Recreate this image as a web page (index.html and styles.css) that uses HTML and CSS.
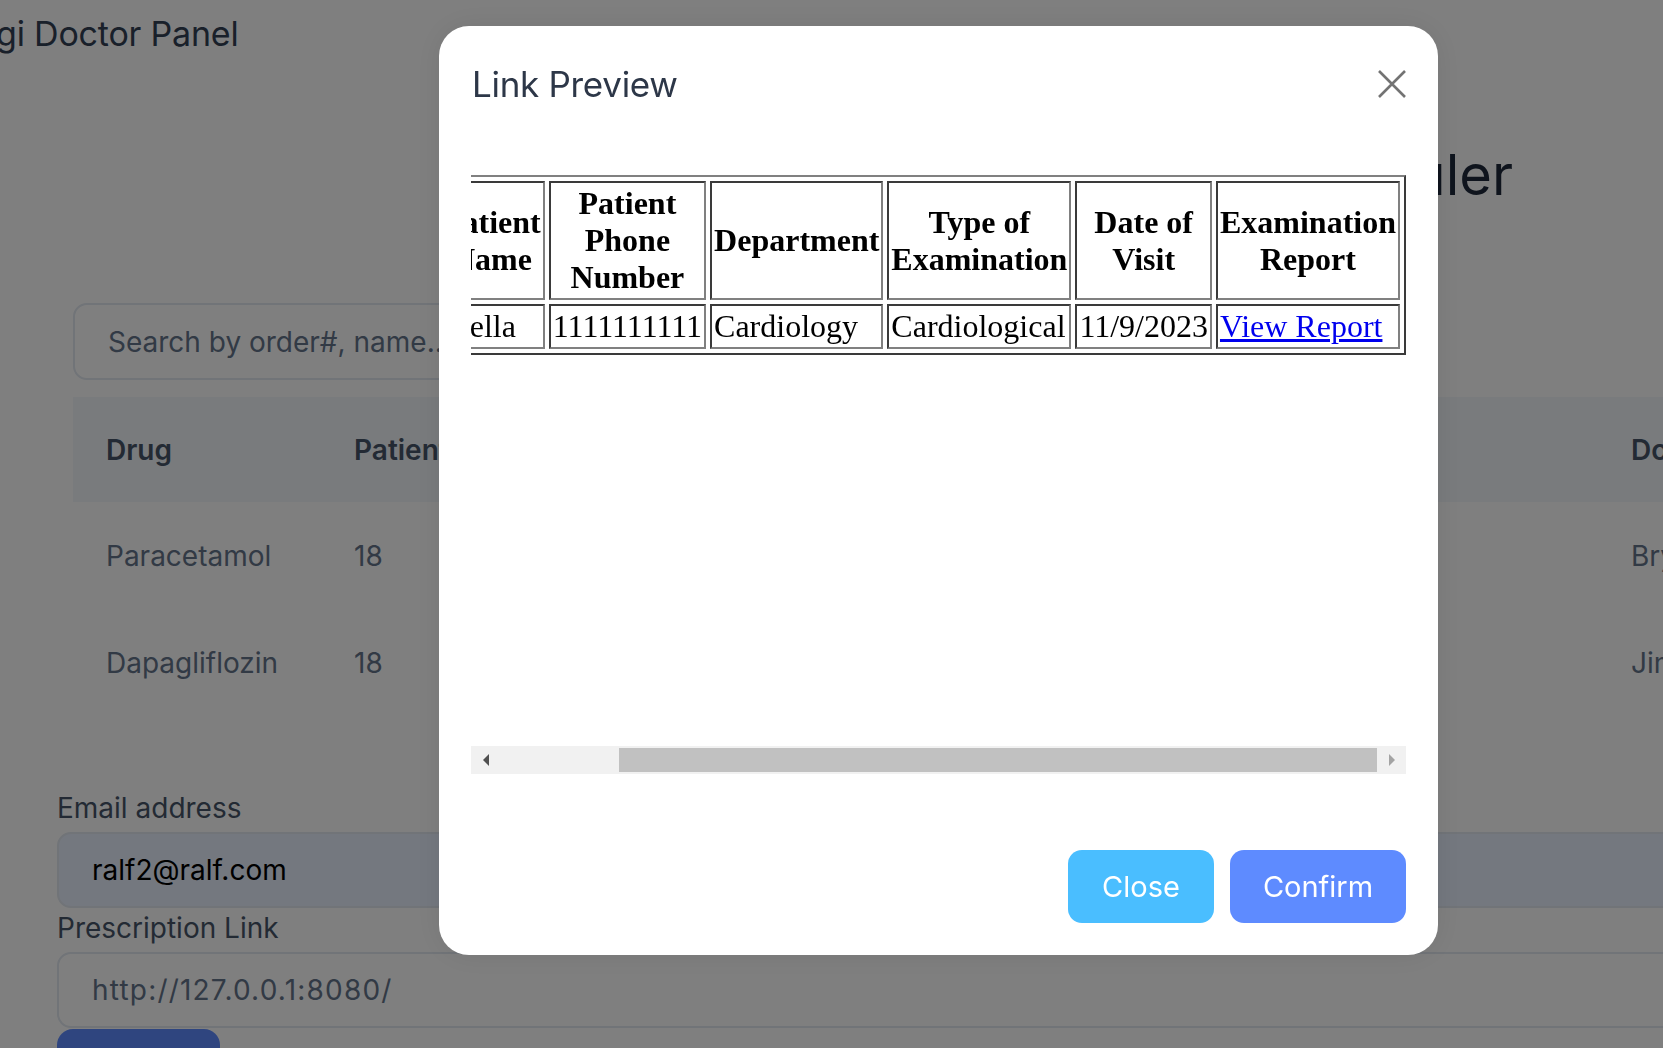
FILE: index.html
```html
<!DOCTYPE html>
<html lang="en">
<head>
<meta charset="utf-8">
<title>Doctor Panel</title>
<link rel="stylesheet" href="styles.css">
</head>
<body>
<div class="page">
  <header class="topbar">
    <span class="brand">gi Doctor Panel</span>
  </header>
  <main class="content">
    <h1 class="page-title">Prescription Scheduler</h1>
    <div class="search">Search by order#, name...</div>
    <div class="rx-table">
      <div class="rx-row rx-head">
        <div class="c c1">Drug</div>
        <div class="c c2">Patient Age</div>
        <div class="c c3">Dose</div>
        <div class="c c4">Frequency</div>
        <div class="c c5">Start Date</div>
        <div class="c c6">Doctor</div>
      </div>
      <div class="rx-row">
        <div class="c c1">Paracetamol</div>
        <div class="c c2">18</div>
        <div class="c c3">500mg</div>
        <div class="c c4">Daily</div>
        <div class="c c5">11/9/2023</div>
        <div class="c c6">Bryan</div>
      </div>
      <div class="rx-row">
        <div class="c c1">Dapagliflozin</div>
        <div class="c c2">18</div>
        <div class="c c3">10mg</div>
        <div class="c c4">Daily</div>
        <div class="c c5">11/9/2023</div>
        <div class="c c6">Jimmy</div>
      </div>
    </div>
  </main>
  <section class="mail-form">
    <div class="label">Email address</div>
    <div class="field field-auto">ralf2@ralf.com</div>
    <div class="label">Prescription Link</div>
    <div class="field field-link">http://127.0.0.1:8080/</div>
    <div class="send-btn"></div>
  </section>
</div>

<div class="overlay"></div>

<div class="modal">
  <div class="modal-head">
    <h2 class="modal-title">Link Preview</h2>
    <svg class="close-x" width="30" height="30" viewBox="0 0 30 30" aria-hidden="true">
      <path d="M2 2 L28 28 M28 2 L2 28" stroke="#737373" stroke-width="2.6" fill="none"/>
    </svg>
  </div>
  <div class="modal-body">
    <div class="viewport">
      <table class="preview">
        <tr>
          <th>Patient ID</th>
          <th>Patient Name</th>
          <th>Patient Phone Number</th>
          <th>Department</th>
          <th>Type of Examination</th>
          <th>Date of Visit</th>
          <th>Examination Report</th>
        </tr>
        <tr>
          <td>12</td>
          <td>Stella</td>
          <td>1111111111</td>
          <td>Cardiology</td>
          <td>Cardiological</td>
          <td>11/9/2023</td>
          <td><a href="#">View Report</a></td>
        </tr>
      </table>
    </div>
    <div class="hscroll">
      <div class="sb-btn sb-left"><span class="arr arr-left"></span></div>
      <div class="sb-thumb"></div>
      <div class="sb-btn sb-right"><span class="arr arr-right"></span></div>
    </div>
  </div>
  <div class="modal-foot">
    <button class="btn btn-close">Close</button>
    <button class="btn btn-confirm">Confirm</button>
  </div>
</div>
</body>
</html>
```
FILE: styles.css
```css
html, body {
  margin: 0;
  padding: 0;
}
body {
  width: 1663px;
  height: 1048px;
  overflow: hidden;
  background: #ffffff;
  font-family: "Inter", "Noto Sans", sans-serif;
  color: #334155;
}
.page {
  width: 1663px;
  height: 1048px;
  overflow: hidden;
}
.topbar {
  height: 70px;
  padding-top: 14px;
  box-sizing: border-box;
  overflow: hidden;
}
.brand {
  display: block;
  margin-left: -4px;
  font-size: 34px;
  line-height: 40px;
  color: #334155;
  white-space: nowrap;
  letter-spacing: -0.2px;
}
.content {
  padding-left: 73px;
}
.page-title {
  margin: 72px 0 0 0;
  font-size: 56px;
  font-weight: 400;
  line-height: 67px;
  color: #1e293b;
  text-align: right;
  padding-right: 150px;
  white-space: nowrap;
}
.search {
  margin-top: 94px;
  width: 760px;
  height: 77px;
  box-sizing: border-box;
  border: 2px solid #e2e8f0;
  border-radius: 14px;
  padding-left: 33px;
  display: flex;
  align-items: center;
  font-size: 28px;
  color: #64748b;
}
.rx-table {
  margin-top: 17px;
}
.rx-row {
  display: flex;
  height: 107px;
  align-items: center;
  font-size: 28px;
  color: #64748b;
  white-space: nowrap;
}
.rx-head {
  height: 105px;
  background: #f3f6fa;
  font-weight: 600;
  color: #475569;
}
.c {
  flex: none;
  box-sizing: border-box;
  padding-left: 33px;
  overflow: hidden;
}
.c1 { width: 248px; }
.c2 { width: 300px; }
.c3 { width: 300px; }
.c4 { width: 300px; }
.c5 { width: 377px; }
.c6 { width: 200px; }

.mail-form {
  padding-left: 57px;
  margin-top: 72px;
}
.label {
  font-size: 28px;
  line-height: 40px;
  color: #475569;
  white-space: nowrap;
}
.field {
  width: 1700px;
  height: 76px;
  box-sizing: border-box;
  border: 2px solid #e2e8f0;
  border-radius: 14px;
  padding-left: 33px;
  display: flex;
  align-items: center;
  font-size: 28px;
  white-space: nowrap;
}
.field-auto {
  background: #e8f0fe;
  color: #000000;
  margin-top: 4px;
}
.field-link {
  color: #64748b;
  margin-top: 4px;
  letter-spacing: 1.2px;
}
.send-btn {
  width: 163px;
  height: 60px;
  margin-top: 1px;
  background: #5e8bff;
  border-radius: 16px;
}

.overlay {
  position: fixed;
  inset: 0;
  background: rgba(0, 0, 0, 0.5);
}

.modal {
  position: fixed;
  left: 439px;
  top: 26px;
  width: 999px;
  height: 929px;
  box-sizing: border-box;
  padding: 32px;
  background: #ffffff;
  border-radius: 30px;
  box-shadow: 0 0 30px rgba(0, 0, 0, 0.08);
  display: flex;
  flex-direction: column;
}
.modal-head {
  height: 52px;
  display: flex;
  align-items: center;
  justify-content: space-between;
}
.modal-title {
  margin: 0 0 0 1px;
  font-size: 35px;
  font-weight: 400;
  color: #2d3748;
  letter-spacing: -0.3px;
}
.close-x {
  display: block;
  margin-right: -1px;
}
.modal-body {
  margin-top: 65px;
  height: 599px;
  display: flex;
  flex-direction: column;
}
.viewport {
  height: 571px;
  overflow: hidden;
  display: flex;
  justify-content: flex-end;
  align-items: flex-start;
}
.preview {
  flex: none;
  width: min-content;
  border-collapse: separate;
  border-spacing: 4px;
  border: 2px solid;
  border-color: #808080 #3a3a3a #3a3a3a #808080;
  font-family: "Liberation Serif", "Times New Roman", serif;
  font-size: 32px;
  line-height: normal;
  color: #000000;
}
.preview th,
.preview td {
  border: 2px solid;
  border-color: #3a3a3a #808080 #808080 #3a3a3a;
  padding: 2px;
  vertical-align: middle;
}
.preview th {
  font-weight: bold;
  text-align: center;
}
.preview td {
  text-align: left;
}
.preview a {
  color: #0000ee;
  text-decoration: underline;
}
.hscroll {
  height: 28px;
  background: #f1f1f1;
  display: flex;
  align-items: center;
}
.sb-btn {
  height: 28px;
  display: flex;
  align-items: center;
  justify-content: center;
}
.sb-left {
  width: 30px;
}
.sb-right {
  flex: 1;
}
.sb-thumb {
  margin-left: 118px;
  width: 758px;
  height: 24px;
  background: #c1c1c1;
}
.arr {
  width: 0;
  height: 0;
  border-top: 6px solid transparent;
  border-bottom: 6px solid transparent;
}
.arr-left {
  border-right: 6px solid #505050;
}
.arr-right {
  border-left: 6px solid #a3a3a3;
}

.modal-foot {
  margin-top: auto;
  display: flex;
  justify-content: flex-end;
  gap: 16px;
}
.btn {
  height: 73px;
  border: none;
  border-radius: 14px;
  font-family: "Inter", "Noto Sans", sans-serif;
  font-size: 29px;
  color: #ffffff;
  padding: 0;
}
.btn-close {
  width: 146px;
  background: #4abeff;
}
.btn-confirm {
  width: 176px;
  background: #5e8bff;
}
```
